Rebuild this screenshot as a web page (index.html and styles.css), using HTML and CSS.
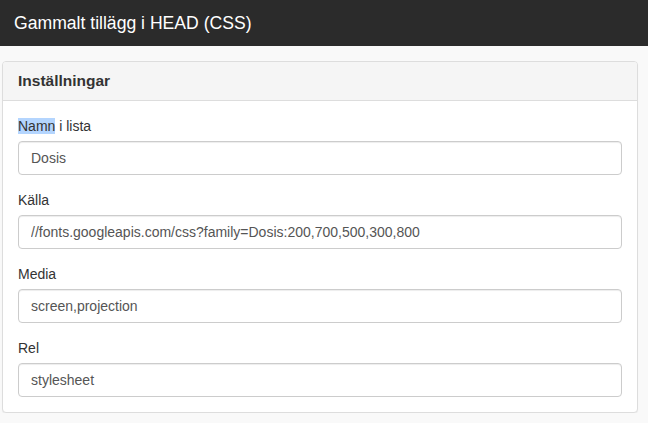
FILE: index.html
```html
<!doctype html>
<html lang="sv">
	<head>
		<meta charset="utf-8">
		<link rel="stylesheet" href="styles.css">
		<title>Gammalt tillägg i HEAD (CSS)</title>
	</head>
	<body>
		<div class="topbar">Gammalt tillägg i HEAD (CSS)</div>

		<div class="panel">
			<div class="panel-heading">Inställningar</div>
			<div class="panel-body">
				<div class="form-group">
					<label for="f_name"><span class="sel">Namn</span> i lista</label>
					<input id="f_name" type="text" class="form-control" value="Dosis">
				</div>
				<div class="form-group">
					<label for="f_src">Källa</label>
					<input id="f_src" type="text" class="form-control" value="//fonts.googleapis.com/css?family=Dosis:200,700,500,300,800">
				</div>
				<div class="form-group">
					<label for="f_media">Media</label>
					<input id="f_media" type="text" class="form-control" value="screen,projection">
				</div>
				<div class="form-group">
					<label for="f_rel">Rel</label>
					<input id="f_rel" type="text" class="form-control" value="stylesheet">
				</div>
			</div>
		</div>
	</body>
</html>
```

FILE: styles.css
```css
body {
	background: #f9f9f9;
	color: #333;
	font: 14px/20px 'Liberation Sans', Arial, sans-serif;
	margin: 0;
}

.topbar {
	background: #2b2b2b;
	color: #fff;
	font-size: 17.6px;
	height: 46px;
	line-height: 46px;
	padding: 0 14px;
}

.panel {
	background: #fff;
	border: 1px solid #ddd;
	border-radius: 4px;
	box-shadow: 0 1px 1px rgba(0, 0, 0, .05);
	margin: 15px 10px 0 2px;
}

.panel-heading {
	background: #f5f5f5;
	border-bottom: 1px solid #ddd;
	border-radius: 3px 3px 0 0;
	font-size: 15.5px;
	font-weight: 700;
	line-height: 19px;
	padding: 9px 15px 10px;
}

.panel-body {
	padding: 15px;
}

.form-group {
	margin-bottom: 15px;
}

.form-group:last-child {
	margin-bottom: 0;
}

label {
	display: block;
	margin-bottom: 5px;
}

.sel {
	background: #b4d5fe;
}

.form-control {
	border: 1px solid #ccc;
	border-radius: 4px;
	box-shadow: inset 0 1px 1px rgba(0, 0, 0, .075);
	box-sizing: border-box;
	color: #555;
	display: block;
	font: inherit;
	height: 34px;
	padding: 6px 12px;
	width: 100%;
}
```
